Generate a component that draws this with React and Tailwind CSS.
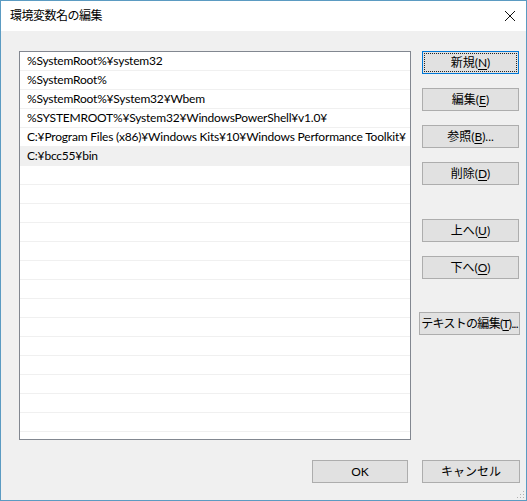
import React from "react";

const FONT = { fontFamily: 'Lato, "Noto Sans CJK JP", sans-serif' };

const paths = [
  "%SystemRoot%¥system32",
  "%SystemRoot%",
  "%SystemRoot%¥System32¥Wbem",
  "%SYSTEMROOT%¥System32¥WindowsPowerShell¥v1.0¥",
  "C:¥Program Files (x86)¥Windows Kits¥10¥Windows Performance Toolkit¥",
  "C:¥bcc55¥bin",
];

const EMPTY_ROWS = 14;

function Label({ text, hot, dots = false }) {
  return (
    <span className="whitespace-nowrap">
      {text}(<span className="underline underline-offset-2">{hot}</span>){dots ? "..." : ""}
    </span>
  );
}

function WinButton({ children, className = "", primary = false }) {
  return (
    <button
      className={
        "h-[23px] text-[12px] text-black bg-[#e1e1e1] border flex items-center justify-center whitespace-nowrap " +
        (primary ? "border-[#0078d7] p-[1px] " : "border-[#adadad] ") +
        className
      }
    >
      {primary ? (
        <span className="w-full h-full border border-dotted border-[#222] flex items-center justify-center">
          {children}
        </span>
      ) : (
        children
      )}
    </button>
  );
}

export default function App() {
  return (
    <div
      className="w-[527px] h-[501px] border border-[#5b9bc2] bg-[#f0f0f0] flex flex-col relative overflow-hidden"
      style={FONT}
    >
      {/* title bar */}
      <div className="h-[30px] bg-white flex items-center justify-between pl-[9px] pr-[9px] shrink-0">
        <span className="text-[12px] text-black tracking-[-0.5px]">環境変数名の編集</span>
        <svg width="12" height="12" viewBox="0 0 12 12" className="mr-[1px]">
          <path d="M1 1 L11 11 M11 1 L1 11" stroke="#111" strokeWidth="1" />
        </svg>
      </div>

      <div className="flex pt-[20px] pl-[18px]">
        {/* path list */}
        <div className="w-[392px] h-[389px] bg-white border border-[#828790] overflow-hidden">
          {paths.map((p, i) => (
            <div
              key={i}
              className={
                "h-[19px] border-b border-[#f0f0f0] pl-[7px] flex items-center text-[12px] tracking-[-0.2px] text-black whitespace-nowrap " +
                (i === paths.length - 1 ? "bg-[#f0f0f0]" : "")
              }
            >
              {p}
            </div>
          ))}
          {Array.from({ length: EMPTY_ROWS }).map((_, i) => (
            <div key={"e" + i} className="h-[19px] border-b border-[#f0f0f0]" />
          ))}
        </div>

        {/* side buttons */}
        <div className="flex flex-col ml-[11px] w-[97px]">
          <WinButton primary>
            <Label text="新規" hot="N" />
          </WinButton>
          <WinButton className="mt-[14px]">
            <Label text="編集" hot="E" />
          </WinButton>
          <WinButton className="mt-[14px]">
            <Label text="参照" hot="B" dots />
          </WinButton>
          <WinButton className="mt-[14px]">
            <Label text="削除" hot="D" />
          </WinButton>
          <WinButton className="mt-[34px]">
            <Label text="上へ" hot="U" />
          </WinButton>
          <WinButton className="mt-[14px]">
            <Label text="下へ" hot="O" />
          </WinButton>
          <WinButton className="mt-[33px] -ml-[3px] w-[101px] text-[11.5px] tracking-[-0.7px]">
            <Label text="テキストの編集" hot="T" dots />
          </WinButton>
        </div>
      </div>

      {/* dialog buttons */}
      <div className="flex justify-end gap-[14px] pr-[6px] mt-[20px]">
        <WinButton className="w-[96px]">OK</WinButton>
        <WinButton className="w-[98px]">キャンセル</WinButton>
      </div>

      {/* size grip */}
      <svg width="10" height="10" viewBox="0 0 10 10" className="absolute right-[1px] bottom-[1px]">
        {[
          [8, 2],
          [5, 5],
          [8, 5],
          [2, 8],
          [5, 8],
          [8, 8],
        ].map(([x, y], i) => (
          <rect key={i} x={x} y={y} width="1" height="1" fill="#b0b0b0" />
        ))}
      </svg>
    </div>
  );
}
